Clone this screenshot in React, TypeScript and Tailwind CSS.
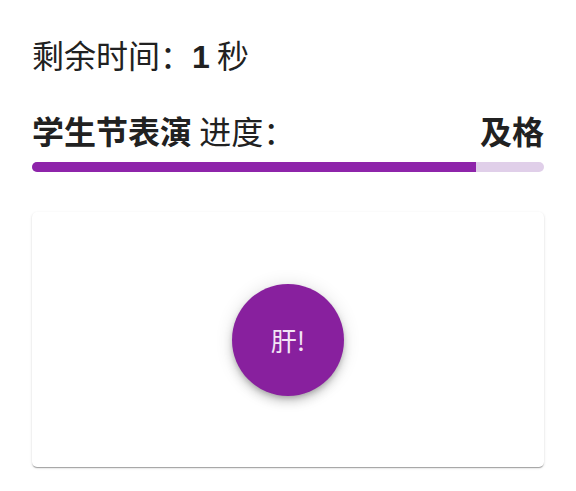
import React from "react";

const font = { fontFamily: '"Noto Sans CJK SC", "Noto Sans", sans-serif' };

export default function App() {
  const progress = 86.7;
  return (
    <div className="w-[576px] h-[491px] bg-white px-8 pt-[34px] text-[#212121]" style={font}>
      <div className="h-[40px] text-[32px] leading-[40px] font-normal">
        剩余时间：<span className="font-bold leading-[32px]" style={{ fontFamily: '"Liberation Sans", "Noto Sans CJK SC", sans-serif' }}>1</span> 秒
      </div>
      <div className="mt-[36px] h-[40px] flex items-center justify-between text-[32px] leading-[40px]">
        <div>
          <span className="font-semibold">学生节表演</span> 进度：
        </div>
        <div className="font-semibold">及格</div>
      </div>
      <div className="mt-[12px] h-[10px] w-full rounded-full bg-[#e0cfe9] overflow-hidden">
        <div className="h-full bg-[#8e24aa]" style={{ width: `${progress}%` }} />
      </div>
      <div className="mt-[40px] h-[255px] rounded-[5px] bg-white shadow-[0_2px_1px_-1px_rgba(0,0,0,0.2),0_1px_1px_0_rgba(0,0,0,0.14),0_1px_3px_0_rgba(0,0,0,0.12)] flex items-center justify-center">
        <button className="w-[112px] h-[112px] rounded-full bg-[#88209e] text-[#f3e5f5] text-[26px] shadow-[0_3px_5px_-1px_rgba(0,0,0,0.2),0_6px_10px_0_rgba(0,0,0,0.14),0_1px_18px_0_rgba(0,0,0,0.12)] flex items-center justify-center">
          肝!
        </button>
      </div>
    </div>
  );
}
